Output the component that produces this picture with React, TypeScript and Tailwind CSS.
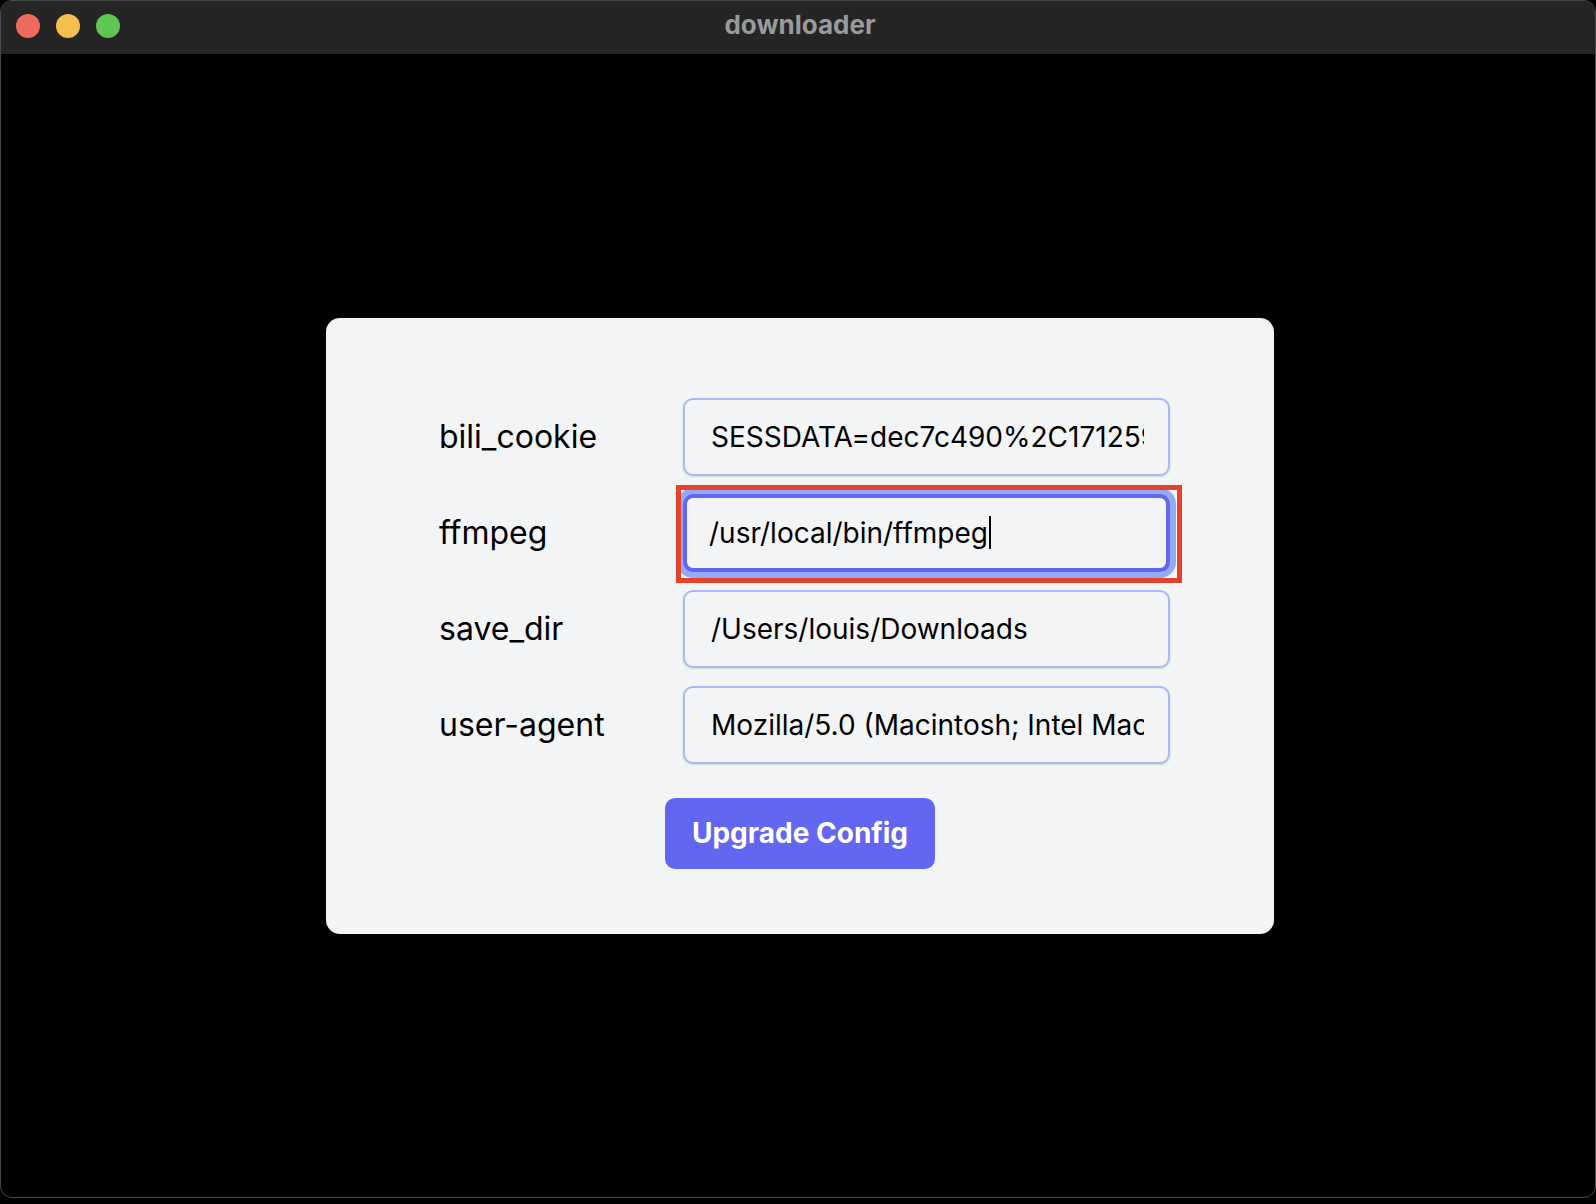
import React from 'react';

const fields = [
  { key: 'bili_cookie', value: 'SESSDATA=dec7c490%2C1712599345%2C6b1f2%2A91CjBxQ2s' },
  { key: 'ffmpeg', value: '/usr/local/bin/ffmpeg', focused: true },
  { key: 'save_dir', value: '/Users/louis/Downloads' },
  { key: 'user-agent', value: 'Mozilla/5.0 (Macintosh; Intel Mac OS X 10_15_7) AppleWebKit/537.36' },
];

const font = { fontFamily: 'Inter, "Noto Sans", sans-serif' };

const App: React.FC = () => {
  return (
    <div className="w-full h-screen bg-black" style={font}>
      <div className="h-[1198px] flex flex-col rounded-[12px] border border-[#4a4a4a] overflow-hidden bg-black">
        {/* title bar */}
        <div className="h-[53px] bg-[#252525] grid grid-cols-[1fr_auto_1fr] items-center shrink-0 pb-[4px]">
          <div className="flex items-center gap-4 pl-[15px]">
            <span className="w-6 h-6 rounded-full bg-[#ee6a5e]" />
            <span className="w-6 h-6 rounded-full bg-[#f5bf4f]" />
            <span className="w-6 h-6 rounded-full bg-[#5fc553]" />
          </div>
          <div className="text-[26px] font-bold text-[#9a9a9a] leading-none pb-[2px] pl-[4px]">downloader</div>
          <div />
        </div>

        {/* content */}
        <div className="flex-1 flex items-center justify-center">
          <div className="w-[948px] ml-[4px] bg-[#f3f4f6] rounded-[14px] pt-[80px] pb-[65px]">
            <div className="flex flex-col gap-[18px] pl-[113px]">
              {fields.map((f) => (
                <div key={f.key} className="flex items-center">
                  <label className="w-[244px] text-[32px] text-black">{f.key}</label>
                  {f.focused ? (
                    <div className="relative">
                      <div className="w-[487px] h-[78px] rounded-[10px] border-[4px] border-[#6366f1] shadow-[0_0_0_6px_#93abf4] bg-[#f3f4f6] flex items-center px-[22px] text-[28px] text-black">
                        <span className="whitespace-nowrap">{f.value}</span>
                        <span className="w-[2px] h-[33px] bg-black ml-[1px]" />
                      </div>
                      <div className="absolute left-[-7px] top-[-9px] right-[-12px] bottom-[-11px] border-[5px] border-[#e5412b] pointer-events-none" />
                    </div>
                  ) : (
                    <input
                      readOnly
                      value={f.value}
                      className="w-[487px] h-[78px] rounded-[10px] border-2 border-[#a4bcf3] bg-[#f3f4f6] pl-[26px] pr-[24px] text-[28px] text-black outline-none shadow-sm"
                      style={font}
                    />
                  )}
                </div>
              ))}
            </div>
            <div className="flex justify-center mt-[34px]">
              <button className="w-[270px] h-[71px] rounded-[10px] bg-[#6366f1] text-white text-[28px] font-bold">
                Upgrade Config
              </button>
            </div>
          </div>
        </div>
      </div>
    </div>
  );
};

export default App;
